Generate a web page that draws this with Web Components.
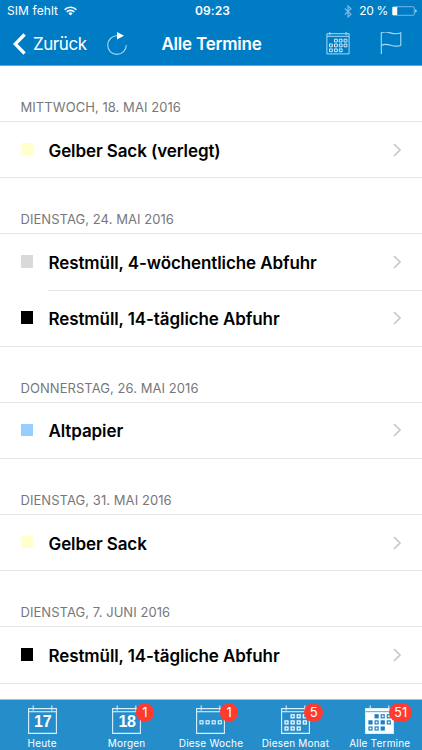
<!DOCTYPE html>
<html lang="de">
<head>
<meta charset="utf-8">
<meta name="viewport" content="width=device-width, initial-scale=1">
<title>Alle Termine</title>
<style>
  body {
    margin: 0;
    height: 750px;
    overflow: hidden;
    background: #fff;
    font-family: Inter, "Liberation Sans", sans-serif;
  }
</style>
</head>
<body>
<waste-app>
  <status-bar slot="top"></status-bar>
  <nav-bar slot="top" heading="Alle Termine"></nav-bar>

  <day-group day="MITTWOCH, 18. MAI 2016">
    <pickup-row color="#ffffc9">Gelber Sack (verlegt)</pickup-row>
  </day-group>
  <day-group day="DIENSTAG, 24. MAI 2016">
    <pickup-row color="#d9d9d9">Restmüll, 4-wöchentliche Abfuhr</pickup-row>
    <pickup-row color="#000">Restmüll, 14-tägliche Abfuhr</pickup-row>
  </day-group>
  <day-group day="DONNERSTAG, 26. MAI 2016">
    <pickup-row color="#99ccff">Altpapier</pickup-row>
  </day-group>
  <day-group day="DIENSTAG, 31. MAI 2016">
    <pickup-row color="#ffffc9">Gelber Sack</pickup-row>
  </day-group>
  <day-group day="DIENSTAG, 7. JUNI 2016">
    <pickup-row color="#000">Restmüll, 14-tägliche Abfuhr</pickup-row>
  </day-group>

  <tab-item slot="tabs" icon="day" number="17">Heute</tab-item>
  <tab-item slot="tabs" icon="day" number="18" badge="1">Morgen</tab-item>
  <tab-item slot="tabs" icon="week" badge="1">Diese Woche</tab-item>
  <tab-item slot="tabs" icon="month" badge="5">Diesen Monat</tab-item>
  <tab-item slot="tabs" icon="all" badge="51">Alle Termine</tab-item>
</waste-app>

<script>
class WasteApp extends HTMLElement {
  constructor() {
    super();
    this.attachShadow({ mode: "open" }).innerHTML = `
<style>
  :host {
    display: flex;
    flex-direction: column;
    height: 750px;
  }
  header {
    flex: none;
    box-sizing: border-box;
    height: 66px;
    background: #007cc5;
    border-bottom: 1px solid #5fa9d8;
    color: #fff;
  }
  main {
    flex: 1;
    min-height: 0;
    overflow: hidden;
  }
  footer {
    flex: none;
    box-sizing: border-box;
    display: grid;
    grid-template-columns: repeat(5, 1fr);
    height: 51px;
    background: #268dcb;
    border-top: 1px solid #a0c4d8;
    color: #fff;
  }
</style>
<header><slot name="top"></slot></header>
<main><slot></slot></main>
<footer><slot name="tabs"></slot></footer>`;
  }
}

class StatusBar extends HTMLElement {
  constructor() {
    super();
    this.attachShadow({ mode: "open" }).innerHTML = `
<style>
  :host {
    display: grid;
    grid-template-columns: 1fr auto 1fr;
    align-items: center;
    box-sizing: border-box;
    height: 22px;
    padding: 0 5px 0 7px;
    font-size: 12px;
    line-height: 22px;
  }
  .left, .right {
    display: flex;
    align-items: center;
  }
  .left { gap: 6px; letter-spacing: 0.08px; }
  .right { justify-content: flex-end; }
  .right span { letter-spacing: -0.3px; }
  .time { padding-left: 1px; font-weight: 600; font-size: 12px; letter-spacing: 0.1px; }
  .bt { margin-right: 7px; }
  .battery { margin-left: 4px; }
</style>
<div class="left">
  <span>SIM fehlt</span>
  <svg width="13" height="10" viewBox="0 0 13 10" fill="none" stroke="#fff" stroke-width="1.6">
    <path d="M.6 3.7a8.4 8.4 0 0 1 11.8 0M2.7 5.9a5.4 5.4 0 0 1 7.6 0"/>
    <path d="M4.4 7.4a3 3 0 0 1 4.2 0L6.5 9.6z" fill="#fff" stroke="none"/>
  </svg>
</div>
<div class="time">09:23</div>
<div class="right">
  <svg class="bt" width="8" height="13" viewBox="0 0 8 13" fill="none" stroke="#79b8e0" stroke-width="1.2">
    <path d="M.8 3.5l6.2 5.8L4 12V1l3 2.7L.8 9.5"/>
  </svg>
  <span>20 %</span>
  <svg class="battery" width="25" height="10" viewBox="0 0 25 10">
    <rect x=".5" y=".7" width="21.8" height="8.6" rx="1.3" fill="none" stroke="#8fc5e6" stroke-width=".8"/>
    <path d="M.5 1h4.7v8H.5z" fill="#fff"/>
    <path d="M23.2 3.3q1.5.3 1.5 1.7t-1.5 1.7z" fill="#b5daef"/>
  </svg>
</div>`;
  }
}

class NavBar extends HTMLElement {
  connectedCallback() {
    this.attachShadow({ mode: "open" }).innerHTML = `
<style>
  :host {
    display: grid;
    grid-template-columns: 1fr auto 1fr;
    align-items: center;
    box-sizing: border-box;
    height: 43px;
    padding: 0 20px 0 13px;
    font-size: 17px;
  }
  .left, .right { display: flex; align-items: center; }
  .right { justify-content: flex-end; gap: 30px; }
  .back { margin-left: 7px; letter-spacing: -0.45px; }
  .reload { margin-left: 19px; }
  h1 {
    margin: 0;
    padding-left: 8px;
    font-size: 17px;
    font-weight: 600;
    letter-spacing: -0.22px;
  }
  svg { display: block; flex: none; }
</style>
<div class="left">
  <svg width="13" height="22" viewBox="0 0 13 22" fill="none" stroke="#fff" stroke-width="3.2">
    <path d="M11.6 1.5L2.2 11l9.4 9.5"/>
  </svg>
  <span class="back">Zurück</span>
  <svg class="reload" width="22" height="24" viewBox="0 0 22 24" fill="none" stroke="#a9d5ef" stroke-width="1.1">
    <path d="M11.5 3.8A9.3 9.3 0 1 0 20.3 13"/>
    <path d="M11 0l7 3.8-7 3.8z" fill="#fff" stroke="none"/>
  </svg>
</div>
<h1>${this.getAttribute("heading")}</h1>
<div class="right">
  <svg width="24" height="24" viewBox="0 0 24 24" fill="none" stroke="#a9d9f5" stroke-width="1">
    <path d="M.9 1.7h22.2v20.2H.9zM1 4.3h22M3.9 0v3.3M20.1 0v3.3" />
    <path d="M8.5 7.2h2.8V10H8.5zM13.3 7.2h2.8V10h-2.8zM18.1 7.2h2.8V10h-2.8zM3.5 12h2.8v2.8H3.5zM8.5 12h2.8v2.8H8.5zM13.3 12h2.8v2.8h-2.8zM18.1 12h2.8v2.8h-2.8zM3.5 16.9h2.8v2.8H3.5zM8.5 16.9h2.8v2.8H8.5zM13.3 16.9h2.8v2.8h-2.8z" stroke="#d2edfc"/>
  </svg>
  <svg width="22" height="24" viewBox="0 0 22 24" fill="none" stroke="#a9d9f5" stroke-width="1.1">
    <path d="M1.3 22V.8C8-2.4 13 4.4 20.8.8v12.6C13 16.6 8 9.6 1.3 13.4"/>
  </svg>
</div>`;
  }
}

class DayGroup extends HTMLElement {
  connectedCallback() {
    this.attachShadow({ mode: "open" }).innerHTML = `
<style>
  :host { display: block; }
  h2 {
    box-sizing: border-box;
    height: 56.15px;
    margin: 0;
    padding: 33px 0 0 20.5px;
    border-bottom: 1px solid #e6e6e8;
    color: #77777b;
    font-size: 13px;
    font-weight: 400;
    line-height: 17px;
    letter-spacing: 0.06px;
  }
  ::slotted(pickup-row:last-child) {
    --inset: 0px;
  }
</style>
<h2>${this.getAttribute("day")}</h2>
<slot></slot>`;
  }
}

class PickupRow extends HTMLElement {
  connectedCallback() {
    this.attachShadow({ mode: "open" }).innerHTML = `
<style>
  :host {
    display: block;
    color: #000;
  }
  .row {
    display: flex;
    align-items: center;
    height: 55.15px;
    padding: 0 20px 0 20.5px;
  }
  .line {
    height: 1px;
    margin-left: var(--inset, 48px);
    background: #e6e6e8;
  }
  i {
    width: 12.5px;
    height: 12.5px;
    margin: -1px 15.5px 0 0;
    background: ${this.getAttribute("color")};
  }
  span {
    flex: 1;
    padding-top: 2px;
    font-size: 17px;
    font-weight: 600;
    letter-spacing: -0.1px;
    white-space: nowrap;
  }
</style>
<div class="row">
  <i></i>
  <span><slot></slot></span>
  <svg width="9" height="14" viewBox="0 0 9 14" fill="none" stroke="#c7c7cc" stroke-width="1.7">
    <path d="M1 1l6 6-6 6"/>
  </svg>
</div>
<div class="line"></div>`;
  }
}

// cells of the calendar glyphs as [column, row] on a 4 by 3 grid
const MONTH = [[1, 0], [2, 0], [3, 0], [0, 1], [1, 1], [2, 1], [3, 1], [0, 2], [1, 2], [2, 2]];
const FILLED = ["1,0", "0,1", "2,1", "2,2"];

function calendarIcon(kind) {
  const all = kind === "all";
  let out = `<path d="M.6 3.6h27.8v24.8H.6z" ${all ? 'fill="#fff"' : ""}/>`;
  out += `<path d="M5.2.4v5M23.8.4v5"/>`;
  out += `<path d="M.6 6.7h27.8" ${all ? 'stroke="#268dcb" stroke-width=".8"' : ""}/>`;
  if (kind === "week") {
    for (let c = 0; c < 4; c++) {
      out += `<rect x="${4 + c * 6.1}" y="15.8" width="3" height="3" stroke-width="1.2"/>`;
    }
  }
  if (kind === "month" || all) {
    for (const [c, r] of MONTH) {
      const solid = all && FILLED.includes(`${c},${r}`);
      out += `<rect x="${4 + c * 6.1}" y="${9.8 + r * 6.1}" width="3" height="3" stroke-width="1.2"
        stroke="${all ? "#1d80be" : "#fff"}" fill="${solid ? "#1d80be" : "none"}"/>`;
    }
  }
  return out;
}

class TabItem extends HTMLElement {
  connectedCallback() {
    const badge = this.getAttribute("badge");
    const number = this.getAttribute("number");
    this.attachShadow({ mode: "open" }).innerHTML = `
<style>
  :host {
    display: flex;
    flex-direction: column;
    align-items: center;
    min-width: 0;
    padding-top: 5px;
    font-size: 10px;
    letter-spacing: 0.2px;
    white-space: nowrap;
  }
  .icon {
    position: relative;
    display: grid;
    width: 29px;
    height: 29px;
  }
  svg, b { grid-area: 1 / 1; }
  b {
    padding: 8px 0 0 1px;
    font: 700 16px/18px "Liberation Sans", sans-serif;
    letter-spacing: -0.2px;
    text-align: center;
  }
  .badge {
    position: absolute;
    left: 23.5px;
    top: -2px;
    box-sizing: border-box;
    min-width: 18.5px;
    height: 18.5px;
    padding: 0 5.2px;
    border-radius: 10px;
    background: #ff3b30;
    font-size: 13px;
    line-height: 18.5px;
    letter-spacing: 0;
    text-align: center;
  }
  .label { margin-top: 1.5px; line-height: 14px; }
</style>
<div class="icon">
  <svg width="29" height="29" viewBox="0 0 29 29" fill="none" stroke="#d9f0fc" stroke-width="1.1">${calendarIcon(this.getAttribute("icon"))}</svg>
  ${number ? `<b>${number}</b>` : ""}
  ${badge ? `<span class="badge">${badge}</span>` : ""}
</div>
<div class="label"><slot></slot></div>`;
  }
}

customElements.define("waste-app", WasteApp);
customElements.define("status-bar", StatusBar);
customElements.define("nav-bar", NavBar);
customElements.define("day-group", DayGroup);
customElements.define("pickup-row", PickupRow);
customElements.define("tab-item", TabItem);
</script>
</body>
</html>
